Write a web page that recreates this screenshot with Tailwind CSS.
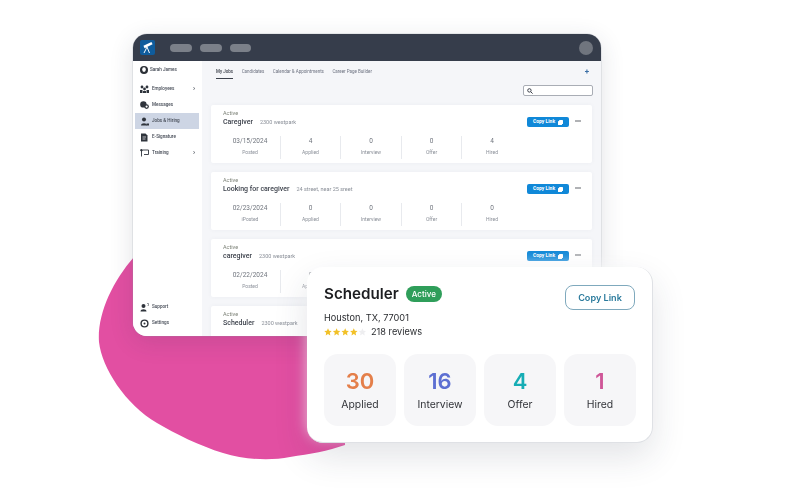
<!DOCTYPE html>
<html>
<head>
<meta charset="utf-8">
<script src="https://cdn.jsdelivr.net/npm/@tailwindcss/browser@4"></script>
</head>
<body class="bg-white">
<div class="relative w-[800px] h-[500px] overflow-hidden bg-white font-['Inter',sans-serif]">
  <!-- pink blob -->
  <svg class="absolute left-0 top-0" width="800" height="500" viewBox="0 0 800 500">
    <path d="M134 257 C112 282 97 315 99 342 C102 368 125 404 157 423 C175 433.7 200 446 223 453 C245 459.7 270 461 290 457 C310 454 328 451 345 445 L345 300 Z" fill="#e24fa2"/>
  </svg>

  <!-- app window -->
  <div class="absolute left-[133px] top-[34px] w-[468px] h-[302px] rounded-[14px] overflow-hidden bg-[#f5f6f9] flex flex-col shadow-[0_6px_24px_rgba(40,50,70,0.14),0_0_0_0.5px_rgba(150,155,165,0.35)] blur-[0.45px] font-['Roboto',sans-serif]">
    <!-- top bar -->
    <div class="h-[27px] shrink-0 bg-[#363d4b] flex items-center pl-[7px] pr-[8px]">
      <div class="w-[15px] h-[15px] bg-[#0f5c9c] rounded-[2px] flex items-center justify-center">
        <svg width="13" height="13" viewBox="0 0 13 13" fill="none" stroke="#fff"><path d="M3 6 L11 2.2" stroke-width="2.6"/><path d="M6 6 L3 12 M6 6 L8.5 12" stroke-width="1"/></svg>
      </div>
      <div class="ml-[15px] flex gap-[8px]">
        <div class="w-[22px] h-[8px] rounded-full bg-[#7b8089]"></div>
        <div class="w-[22px] h-[8px] rounded-full bg-[#7b8089]"></div>
        <div class="w-[21px] h-[8px] rounded-full bg-[#7b8089]"></div>
      </div>
      <div class="ml-auto w-[14px] h-[14px] rounded-full bg-[#70757e]"></div>
    </div>
    <div class="flex flex-1 min-h-0">
      <!-- sidebar -->
      <div class="w-[69px] shrink-0 bg-white flex flex-col text-[4.6px] font-medium text-[#444a55] pl-[2px] pr-[3px]">
        <div class="h-[16px] mt-[1px] flex items-center pl-[5px] gap-[2px]">
          <svg width="8" height="8" viewBox="0 0 8 8"><circle cx="4" cy="4" r="4" fill="#2b2f36"/><ellipse cx="4" cy="3.6" rx="1.8" ry="2.3" fill="#fff"/></svg>
          <span>Sarah James</span>
        </div>
        <div class="h-[16px] mt-[3px] flex items-center pl-[5px] gap-[3px]">
          <svg width="9" height="8" viewBox="0 0 9 8" fill="#2f343c"><circle cx="2" cy="2" r="1.4"/><circle cx="7" cy="2" r="1.4"/><circle cx="4.5" cy="4" r="1.4"/><path d="M0 5h2.5v3H0zM6.5 5H9v3H6.5zM3 6h3v2H3z"/></svg>
          <span>Employees</span><span class="ml-auto mr-[4px] text-[7px] leading-none">›</span>
        </div>
        <div class="h-[16px] flex items-center pl-[5px] gap-[3px]">
          <svg width="9" height="8" viewBox="0 0 9 8" fill="#2f343c"><circle cx="3.4" cy="3.4" r="3.2"/><circle cx="6.6" cy="5.6" r="2.3"/><circle cx="6.6" cy="5.6" r="1.1" fill="#fff"/></svg>
          <span>Messages</span>
        </div>
        <div class="h-[16px] flex items-center pl-[5px] gap-[3px] bg-[#cdd5e4]">
          <svg width="9" height="9" viewBox="0 0 9 9" fill="#2f343c"><circle cx="4" cy="2.4" r="2"/><path d="M1 8.5 C1 5.5 7 5.5 7 8.5Z"/><path d="M6.5 6.5h2.5v2H6.5z"/></svg>
          <span>Jobs &amp; Hiring</span>
        </div>
        <div class="h-[16px] flex items-center pl-[5px] gap-[3px]">
          <svg width="9" height="9" viewBox="0 0 9 9" fill="#2f343c"><path d="M1 0.5h4.5L7.5 2.5V8.5H1z"/><path d="M2.5 4h3.5M2.5 6h3" stroke="#fff" stroke-width=".7"/></svg>
          <span>E-Signature</span>
        </div>
        <div class="h-[16px] flex items-center pl-[5px] gap-[3px]">
          <svg width="9" height="8" viewBox="0 0 9 8" fill="none" stroke="#2f343c" stroke-width=".9"><path d="M3 1h5.5v4.5H4M1.5 1v6.5"/><circle cx="1.5" cy="1.2" r=".9" fill="#2f343c"/></svg>
          <span>Training</span><span class="ml-auto mr-[4px] text-[7px] leading-none">›</span>
        </div>
        <div class="mt-auto h-[16px] flex items-center pl-[5px] gap-[3px]">
          <svg width="9" height="9" viewBox="0 0 9 9" fill="#2f343c"><circle cx="3.5" cy="3" r="2"/><path d="M0.5 8.5 C0.5 5.5 6.5 5.5 6.5 8.5Z"/><path d="M7 .5h1.5v2H7.6" stroke="#2f343c" stroke-width=".5" fill="none"/></svg>
          <span>Support</span>
        </div>
        <div class="h-[16px] mb-[5px] flex items-center pl-[5px] gap-[3px]">
          <svg width="9" height="9" viewBox="0 0 9 9" fill="none" stroke="#2f343c"><circle cx="4.5" cy="4.5" r="3.4" stroke-width="1.4"/><circle cx="4.5" cy="4.5" r="1" fill="#2f343c" stroke="none"/></svg>
          <span>Settings</span>
        </div>
      </div>
      <!-- main -->
      <div class="flex-1 min-w-0 pl-[9px] pr-[9px] flex flex-col">
        <div class="flex items-start shrink-0 h-[24px] pt-[8px] pl-[5px] text-[4.5px] text-[#6d7280] gap-[8.5px]">
          <span class="font-medium text-[#3c414b] border-b border-[#3c414b] h-[10px]">My Jobs</span>
          <span>Candidates</span>
          <span>Calendar &amp; Appointments</span>
          <span>Career Page Builder</span>
          <span class="ml-auto mr-[3px] text-[8px] leading-[6px] font-bold text-[#3a6ea5]">+</span>
        </div>
        <div class="flex justify-end shrink-0 h-[20px] -mr-[1px]">
          <div class="w-[70px] h-[11px] bg-white border border-[#a9adb5] rounded-[2px] flex items-center pl-[3px]">
            <svg width="6" height="6" viewBox="0 0 6 6" fill="none" stroke="#3c414b" stroke-width="1"><circle cx="2.4" cy="2.4" r="1.7"/><path d="M3.8 3.8L5.6 5.6"/></svg>
          </div>
        </div>
        <div class="flex flex-col gap-[9px]">
          <!-- card 1 -->
          <div class="h-[58px] shrink-0 bg-white rounded-[2px] shadow-[0_0_4px_rgba(60,70,90,0.05)] pl-[12px] pt-[5px] relative">
            <div class="text-[5.5px] leading-[7px] text-[#7d8278]">Active</div>
            <div class="flex items-baseline gap-[7px] leading-[10px]"><span class="text-[7px] font-medium text-[#3d424c]">Caregiver</span><span class="text-[5.5px] text-[#8a8f98]">2300 westpark</span></div>
            <div class="absolute right-[23px] top-[12px] w-[42px] h-[10px] rounded-[2px] bg-[#1088d8] flex items-center justify-center gap-[3px] text-[5px] font-bold text-white"><span>Copy Link</span><svg width="5" height="5" viewBox="0 0 5 5" fill="#fff"><rect x="1" y="0" width="4" height="4" rx=".6"/><rect x="0" y="1" width="4" height="4" rx=".6"/></svg></div>
            <svg class="absolute right-[11px] top-[15px]" width="6" height="2" viewBox="0 0 6 2" fill="#3a3f48"><circle cx="1" cy="1" r=".75"/><circle cx="3" cy="1" r=".75"/><circle cx="5" cy="1" r=".75"/></svg>
            <div class="-ml-[3px] mt-[9px] grid grid-cols-[61px_60px_61px_60px_60px] text-center">
              <div class="h-[23px] border-r border-[#e8eaee]"><div class="text-[6.5px] leading-[10px] text-[#70757e]">03/15/2024</div><div class="text-[5px] leading-[12px] text-[#8a8f98]">Posted</div></div>
              <div class="h-[23px] border-r border-[#e8eaee]"><div class="text-[6.5px] leading-[10px] text-[#70757e]">4</div><div class="text-[5px] leading-[12px] text-[#8a8f98]">Applied</div></div>
              <div class="h-[23px] border-r border-[#e8eaee]"><div class="text-[6.5px] leading-[10px] text-[#70757e]">0</div><div class="text-[5px] leading-[12px] text-[#8a8f98]">Interview</div></div>
              <div class="h-[23px] border-r border-[#e8eaee]"><div class="text-[6.5px] leading-[10px] text-[#70757e]">0</div><div class="text-[5px] leading-[12px] text-[#8a8f98]">Offer</div></div>
              <div class="h-[23px]"><div class="text-[6.5px] leading-[10px] text-[#70757e]">4</div><div class="text-[5px] leading-[12px] text-[#8a8f98]">Hired</div></div>
            </div>
          </div>
          <!-- card 2 -->
          <div class="h-[58px] shrink-0 bg-white rounded-[2px] shadow-[0_0_4px_rgba(60,70,90,0.05)] pl-[12px] pt-[5px] relative">
            <div class="text-[5.5px] leading-[7px] text-[#7d8278]">Active</div>
            <div class="flex items-baseline gap-[7px] leading-[10px]"><span class="text-[7px] font-medium text-[#3d424c]">Looking for caregiver</span><span class="text-[5.5px] text-[#8a8f98]">24 street, near 25 sreet</span></div>
            <div class="absolute right-[23px] top-[12px] w-[42px] h-[10px] rounded-[2px] bg-[#1088d8] flex items-center justify-center gap-[3px] text-[5px] font-bold text-white"><span>Copy Link</span><svg width="5" height="5" viewBox="0 0 5 5" fill="#fff"><rect x="1" y="0" width="4" height="4" rx=".6"/><rect x="0" y="1" width="4" height="4" rx=".6"/></svg></div>
            <svg class="absolute right-[11px] top-[15px]" width="6" height="2" viewBox="0 0 6 2" fill="#3a3f48"><circle cx="1" cy="1" r=".75"/><circle cx="3" cy="1" r=".75"/><circle cx="5" cy="1" r=".75"/></svg>
            <div class="-ml-[3px] mt-[9px] grid grid-cols-[61px_60px_61px_60px_60px] text-center">
              <div class="h-[23px] border-r border-[#e8eaee]"><div class="text-[6.5px] leading-[10px] text-[#70757e]">02/23/2024</div><div class="text-[5px] leading-[12px] text-[#8a8f98]">iPosted</div></div>
              <div class="h-[23px] border-r border-[#e8eaee]"><div class="text-[6.5px] leading-[10px] text-[#70757e]">0</div><div class="text-[5px] leading-[12px] text-[#8a8f98]">Applied</div></div>
              <div class="h-[23px] border-r border-[#e8eaee]"><div class="text-[6.5px] leading-[10px] text-[#70757e]">0</div><div class="text-[5px] leading-[12px] text-[#8a8f98]">Interview</div></div>
              <div class="h-[23px] border-r border-[#e8eaee]"><div class="text-[6.5px] leading-[10px] text-[#70757e]">0</div><div class="text-[5px] leading-[12px] text-[#8a8f98]">Offer</div></div>
              <div class="h-[23px]"><div class="text-[6.5px] leading-[10px] text-[#70757e]">0</div><div class="text-[5px] leading-[12px] text-[#8a8f98]">Hired</div></div>
            </div>
          </div>
          <!-- card 3 -->
          <div class="h-[58px] shrink-0 bg-white rounded-[2px] shadow-[0_0_4px_rgba(60,70,90,0.05)] pl-[12px] pt-[5px] relative">
            <div class="text-[5.5px] leading-[7px] text-[#7d8278]">Active</div>
            <div class="flex items-baseline gap-[7px] leading-[10px]"><span class="text-[7px] font-medium text-[#3d424c]">caregiver</span><span class="text-[5.5px] text-[#8a8f98]">2300 westpark</span></div>
            <div class="absolute right-[23px] top-[12px] w-[42px] h-[10px] rounded-[2px] bg-[#1088d8] flex items-center justify-center gap-[3px] text-[5px] font-bold text-white"><span>Copy Link</span><svg width="5" height="5" viewBox="0 0 5 5" fill="#fff"><rect x="1" y="0" width="4" height="4" rx=".6"/><rect x="0" y="1" width="4" height="4" rx=".6"/></svg></div>
            <svg class="absolute right-[11px] top-[15px]" width="6" height="2" viewBox="0 0 6 2" fill="#3a3f48"><circle cx="1" cy="1" r=".75"/><circle cx="3" cy="1" r=".75"/><circle cx="5" cy="1" r=".75"/></svg>
            <div class="-ml-[3px] mt-[9px] grid grid-cols-[61px_60px_61px_60px_60px] text-center">
              <div class="h-[23px] border-r border-[#e8eaee]"><div class="text-[6.5px] leading-[10px] text-[#70757e]">02/22/2024</div><div class="text-[5px] leading-[12px] text-[#8a8f98]">Posted</div></div>
              <div class="h-[23px] border-r border-[#e8eaee]"><div class="text-[6.5px] leading-[10px] text-[#70757e]">0</div><div class="text-[5px] leading-[12px] text-[#8a8f98]">Applied</div></div>
            </div>
          </div>
          <!-- card 4 -->
          <div class="h-[58px] shrink-0 bg-white rounded-[2px] shadow-[0_0_4px_rgba(60,70,90,0.05)] pl-[12px] pt-[5px]">
            <div class="text-[5.5px] leading-[7px] text-[#7d8278]">Active</div>
            <div class="flex items-baseline gap-[7px] leading-[10px]"><span class="text-[7px] font-medium text-[#3d424c]">Scheduler</span><span class="text-[5.5px] text-[#8a8f98]">2300 westpark</span></div>
          </div>
        </div>
      </div>
    </div>
  </div>

  <!-- floating card -->
  <div class="absolute left-[307px] top-[267px] w-[346px] h-[176px] rounded-[16px] bg-white border-r border-b border-[#dfe1e5] shadow-[0_14px_34px_rgba(40,50,70,0.13),0_-4px_14px_rgba(255,255,255,0.7)] px-[17px] pt-[18px]">
    <div class="flex items-start">
      <div class="flex-1">
        <div class="flex items-center gap-[7px] h-[18px]">
          <span class="text-[15.2px] font-semibold text-[#1c1d20] leading-none">Scheduler</span>
          <span class="w-[36px] h-[16px] rounded-full bg-[#2f9e5a] text-white text-[8px] font-medium flex items-center justify-center">Active</span>
        </div>
        <div class="mt-[8px] text-[9.2px] leading-[14px] text-[#2a2c30]">Houston, TX, 77001</div>
        <div class="flex items-center h-[14px]">
          <svg width="42" height="8" viewBox="0 0 42 8"><g fill="#f2c128"><path d="M4 .3l1.1 2.4 2.6.3-1.9 1.8.5 2.6L4 6.1 1.7 7.4l.5-2.6L.3 3l2.6-.3z"/><path transform="translate(8.6 0)" d="M4 .3l1.1 2.4 2.6.3-1.9 1.8.5 2.6L4 6.1 1.7 7.4l.5-2.6L.3 3l2.6-.3z"/><path transform="translate(17.2 0)" d="M4 .3l1.1 2.4 2.6.3-1.9 1.8.5 2.6L4 6.1 1.7 7.4l.5-2.6L.3 3l2.6-.3z"/><path transform="translate(25.8 0)" d="M4 .3l1.1 2.4 2.6.3-1.9 1.8.5 2.6L4 6.1 1.7 7.4l.5-2.6L.3 3l2.6-.3z"/></g><path transform="translate(34.4 0)" fill="#eeeef0" d="M4 .3l1.1 2.4 2.6.3-1.9 1.8.5 2.6L4 6.1 1.7 7.4l.5-2.6L.3 3l2.6-.3z"/></svg>
          <span class="ml-[5px] text-[9.2px] text-[#2a2c30]">218 reviews</span>
        </div>
      </div>
      <div class="w-[70px] h-[25px] rounded-[8px] border border-[#7fa9bd] text-[#2a7a9c] text-[9.1px] font-semibold flex items-center justify-center">Copy Link</div>
    </div>
    <div class="mt-[15px] grid grid-cols-4 gap-[8px] w-[312px]">
      <div class="h-[72px] rounded-[14px] bg-[#f6f6f8] flex flex-col items-center justify-center"><span class="text-[22px] leading-[28px] font-semibold text-[#e47f4a]">30</span><span class="mt-[2px] text-[10.4px] leading-[16px] text-[#33353a]">Applied</span></div>
      <div class="h-[72px] rounded-[14px] bg-[#f6f6f8] flex flex-col items-center justify-center"><span class="text-[22px] leading-[28px] font-semibold text-[#5d6fd2]">16</span><span class="mt-[2px] text-[10.4px] leading-[16px] text-[#33353a]">Interview</span></div>
      <div class="h-[72px] rounded-[14px] bg-[#f6f6f8] flex flex-col items-center justify-center"><span class="text-[22px] leading-[28px] font-semibold text-[#16adb5]">4</span><span class="mt-[2px] text-[10.4px] leading-[16px] text-[#33353a]">Offer</span></div>
      <div class="h-[72px] rounded-[14px] bg-[#f6f6f8] flex flex-col items-center justify-center"><span class="text-[22px] leading-[28px] font-semibold text-[#cf5698]">1</span><span class="mt-[2px] text-[10.4px] leading-[16px] text-[#33353a]">Hired</span></div>
    </div>
  </div>
</div>
</body>
</html>
